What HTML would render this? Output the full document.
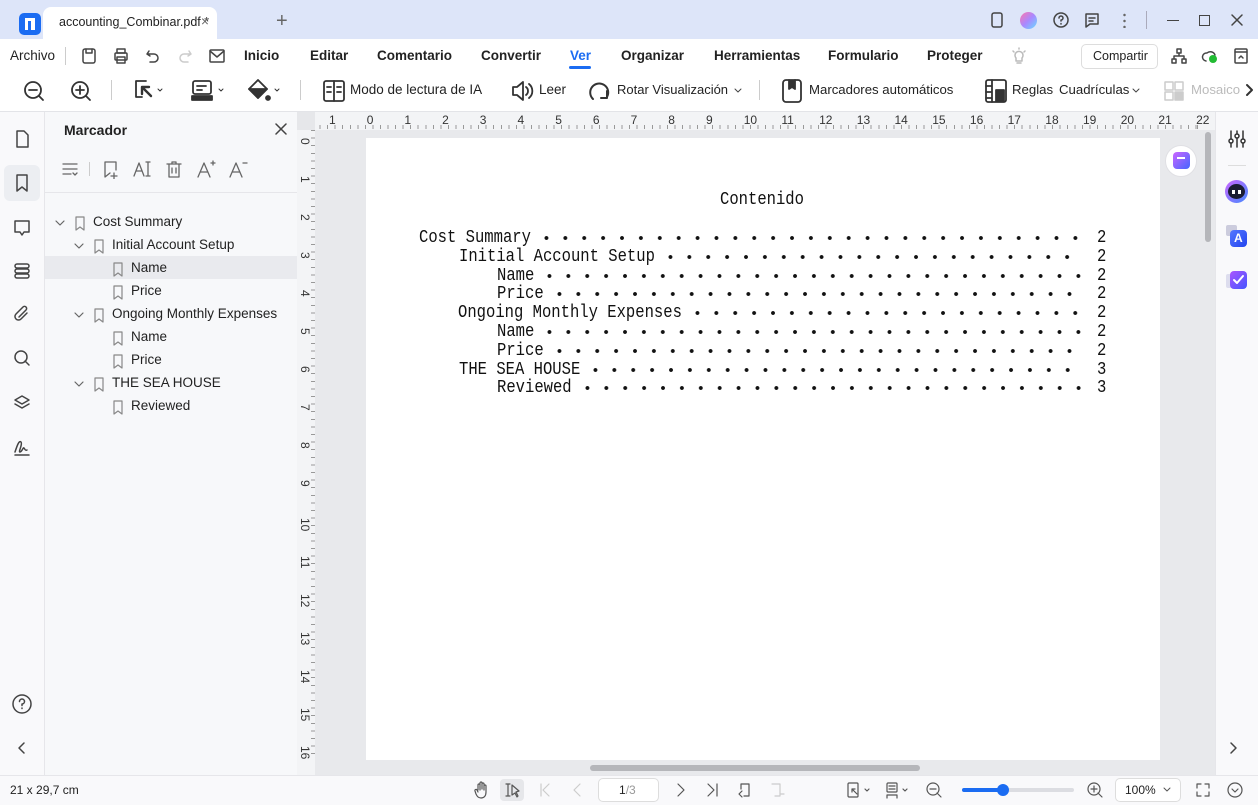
<!DOCTYPE html>
<html><head><meta charset="utf-8"><style>
*{margin:0;padding:0;box-sizing:border-box}
body{width:1258px;height:805px;overflow:hidden;position:relative;font-family:"Liberation Sans",sans-serif;background:#fff;color:#222}
.a{position:absolute}
.t{font-size:13.5px;white-space:nowrap}
.m{font-weight:bold;font-size:13.5px}
svg{position:absolute;fill:none;stroke:#444;stroke-width:1.5;stroke-linecap:round;stroke-linejoin:round}
.doc{font-family:"Liberation Mono",monospace;font-size:15.55px;color:#111;white-space:nowrap;transform-origin:0 50%;transform:scaleY(1.2)}
.dots{position:absolute;height:4px;background:radial-gradient(circle,#111 1.7px,transparent 2.2px) 0 0/18.9px 4px repeat-x}
.rl{position:absolute;font-size:12px;color:#333}
</style></head><body>
<div class="a" style="left:0;top:0;width:1258px;height:39px;background:#dde5f9"></div>
<div class="a" style="left:19px;top:13px;width:22px;height:22px;border-radius:5px;background:#1b6cf2"></div>
<div class="a" style="left:25px;top:18px;width:10px;height:12px;border:3px solid #fff;border-right-width:4px;border-bottom:none"></div>
<div class="a" style="left:43px;top:7px;width:174px;height:32px;background:#fff;border-radius:8px 8px 0 0"></div>
<div class="a t" style="left:59px;top:15px;font-size:12.5px">accounting_Combinar.pdf *</div>
<div class="a t" style="left:201px;top:14px;color:#666">×</div>
<div class="a t" style="left:276px;top:10px;font-size:20px;color:#666">+</div>
<svg style="left:988px;top:11px" width="18" height="18"><rect x="4" y="2" width="10" height="14" rx="2"/></svg>
<div class="a" style="left:1020px;top:12px;width:17px;height:17px;border-radius:50%;background:linear-gradient(135deg,#f7a,#a8f,#6df)"></div>
<svg style="left:1052px;top:11px" width="18" height="18"><circle cx="9" cy="9" r="7"/><path d="M7 7a2 2 0 1 1 2 2v1M9 12.5v.5"/></svg>
<svg style="left:1083px;top:11px" width="18" height="18"><path d="M3 3h12v10H7l-4 3z"/><path d="M6 7h6M6 10h4"/></svg>
<div class="a" style="left:1123px;top:12px;width:3px;height:16px;background:radial-gradient(circle,#666 1px,transparent 1.5px) 0 0/3px 6px"></div>
<div class="a" style="left:1146px;top:11px;width:1px;height:18px;background:#aab"></div>
<div class="a" style="left:1167px;top:20px;width:12px;height:1px;background:#444"></div>
<div class="a" style="left:1199px;top:15px;width:11px;height:11px;border:1.3px solid #444"></div>
<svg style="left:1228px;top:11px" width="18" height="18"><path d="M4 4l10 10M14 4L4 14"/></svg>
<div class="a t" style="left:10px;top:48px">Archivo</div>
<div class="a" style="left:65px;top:47px;width:1px;height:18px;background:#ccc"></div>
<svg style="left:80px;top:47px" width="18" height="18"><rect x="3" y="2" width="12" height="14" rx="2"/><path d="M6 2v4h6V2"/></svg>
<svg style="left:112px;top:47px" width="18" height="18"><rect x="3" y="6" width="12" height="7" rx="1"/><rect x="5" y="2" width="8" height="4"/><rect x="5" y="10" width="8" height="6"/></svg>
<svg style="left:144px;top:47px" width="18" height="18"><path d="M5 4L3 7l3 2M3 7h7a4 4 0 0 1 0 8H6"/></svg>
<svg style="left:176px;top:47px;stroke:#ccc" width="18" height="18"><path d="M13 4l2 3-3 2M15 7H8a4 4 0 0 0 0 8h4"/></svg>
<svg style="left:208px;top:47px" width="18" height="18"><rect x="2" y="3" width="14" height="12" rx="1"/><path d="M2 4l7 6 7-6"/></svg>
<div class="a t m" style="left:244px;top:48px">Inicio</div>
<div class="a t m" style="left:310px;top:48px">Editar</div>
<div class="a t m" style="left:377px;top:48px">Comentario</div>
<div class="a t m" style="left:481px;top:48px">Convertir</div>
<div class="a t m" style="left:570px;top:48px;color:#1b6cf2">Ver</div>
<div class="a" style="left:569px;top:66px;width:22px;height:3px;border-radius:2px;background:#1b6cf2"></div>
<div class="a t m" style="left:621px;top:48px">Organizar</div>
<div class="a t m" style="left:714px;top:48px">Herramientas</div>
<div class="a t m" style="left:828px;top:48px">Formulario</div>
<div class="a t m" style="left:927px;top:48px">Proteger</div>
<svg style="left:1010px;top:46px;stroke:#bbb" width="18" height="20"><path d="M6 12a4 4 0 1 1 6 0v3H6zM7 17h4M9 2v1M3 5l1 1M15 5l-1 1"/></svg>
<div class="a" style="left:1081px;top:44px;width:77px;height:25px;border:1px solid #ddd;border-radius:5px"></div>
<div class="a t" style="left:1093px;top:49px;font-size:12.5px">Compartir</div>
<svg style="left:1170px;top:47px" width="18" height="18"><rect x="7" y="2" width="4" height="4"/><rect x="2" y="12" width="4" height="4"/><rect x="12" y="12" width="4" height="4"/><path d="M9 6v3M4 12V9h10v3"/></svg>
<svg style="left:1201px;top:47px" width="18" height="18"><path d="M5 14a4 4 0 0 1 1-8 5 5 0 0 1 8 2"/></svg>
<div class="a" style="left:1209px;top:55px;width:8px;height:8px;border-radius:50%;background:#2b3"></div>
<svg style="left:1232px;top:47px" width="18" height="18"><rect x="3" y="2" width="12" height="14" rx="1"/><path d="M3 5h12M7 11l2-2 2 2"/></svg>
<svg style="left:22px;top:79px;stroke:#333;stroke-width:1.8" width="24" height="24"><circle cx="11" cy="11" r="8"/><path d="M7 11h8M17 17l4 4"/></svg>
<svg style="left:69px;top:79px;stroke:#333;stroke-width:1.8" width="24" height="24"><circle cx="11" cy="11" r="8"/><path d="M7 11h8M11 7v8M17 17l4 4"/></svg>
<div class="a" style="left:111px;top:80px;width:1px;height:20px;background:#ccc"></div>
<svg style="left:132px;top:78px;stroke:#333;stroke-width:1.8" width="36" height="24"><path d="M14 3H4v16h6"/><path d="M10 9l9 9M10 9v7M10 9h7" stroke-width="2.4"/><path d="M26 11l2 2 2-2" stroke-width="1"/></svg>
<svg style="left:190px;top:78px;stroke:#333;stroke-width:1.8" width="36" height="24"><rect x="3" y="3" width="18" height="13" rx="2"/><path d="M7 8h9M7 12h5"/><rect x="2" y="18" width="20" height="4" fill="#333"/><path d="M29 11l2 2 2-2" stroke-width="1"/></svg>
<svg style="left:246px;top:78px;stroke:#333;stroke-width:1.8" width="36" height="24"><path d="M12 2l9 9-9 9-9-9z"/><path d="M3 11h18l-9 9z" fill="#333"/><circle cx="22" cy="20" r="2" fill="#333"/><path d="M29 11l2 2 2-2" stroke-width="1"/></svg>
<div class="a" style="left:300px;top:80px;width:1px;height:20px;background:#ccc"></div>
<svg style="left:322px;top:79px;stroke:#333;stroke-width:1.8" width="24" height="24"><rect x="2" y="2" width="20" height="20" rx="2"/><path d="M12 2v20M5 8h4M5 13h4M15 8h4M15 13h4"/></svg>
<div class="a t" style="left:350px;top:82px">Modo de lectura de IA</div>
<svg style="left:510px;top:79px;stroke:#333;stroke-width:1.8" width="24" height="24"><path d="M3 8h4l6-5v18l-6-5H3z"/><path d="M16 8a5 5 0 0 1 0 8M19 5a9 9 0 0 1 0 14"/></svg>
<div class="a t" style="left:539px;top:82px">Leer</div>
<svg style="left:588px;top:79px;stroke:#333;stroke-width:2" width="24" height="24"><path d="M5 20A9 9 0 1 1 19 18"/><path d="M19 12v7h-6"/></svg>
<div class="a t" style="left:617px;top:82px;font-size:13px">Rotar Visualización</div>
<svg style="left:734px;top:86px;stroke-width:1" width="8" height="8"><path d="M1 3l3 3 3-3"/></svg>
<div class="a" style="left:759px;top:80px;width:1px;height:20px;background:#ccc"></div>
<svg style="left:780px;top:78px;stroke:#333;stroke-width:1.8" width="24" height="26"><rect x="3" y="2" width="18" height="22" rx="3"/><path d="M9 2v9l3-2 3 2V2" fill="#333"/></svg>
<div class="a t" style="left:809px;top:82px;font-size:13.2px">Marcadores automáticos</div>
<svg style="left:984px;top:78px;stroke:#333;stroke-width:1.8" width="24" height="26"><rect x="2" y="2" width="20" height="22" rx="2"/><path d="M8 2v22M2 8h6M2 14h6M2 20h6"/><rect x="12" y="12" width="8" height="11" fill="#333"/></svg>
<div class="a t" style="left:1012px;top:82px;font-size:13.2px">Reglas</div>
<div class="a t" style="left:1059px;top:82px;font-size:13.2px">Cuadrículas</div>
<svg style="left:1132px;top:86px;stroke-width:1" width="8" height="8"><path d="M1 3l3 3 3-3"/></svg>
<svg style="left:1163px;top:80px;stroke:#ccc;stroke-width:1.5" width="22" height="22"><rect x="2" y="2" width="8" height="8"/><rect x="12" y="2" width="8" height="8"/><rect x="2" y="12" width="8" height="8"/><rect x="12" y="12" width="8" height="8" fill="#ccc"/></svg>
<div class="a t" style="left:1191px;top:82px;color:#bbb;font-size:13.2px">Mosaicos</div>
<div class="a" style="left:1240px;top:75px;width:18px;height:30px;background:#fff"></div>
<svg style="left:1244px;top:83px;stroke:#333;stroke-width:2" width="12" height="14"><path d="M3 2l5 5-5 5"/></svg>
<div class="a" style="left:0;top:111px;width:1258px;height:1px;background:#e3e4e8"></div>
<div class="a" style="left:0;top:112px;width:45px;height:663px;background:#f9f9fb;border-right:1px solid #e6e6ea"></div>
<svg style="left:13px;top:129px" width="18" height="20"><path d="M4 2h7l4 4v12H4z"/></svg>
<div class="a" style="left:4px;top:165px;width:36px;height:36px;border-radius:6px;background:#eceef2"></div>
<svg style="left:13px;top:173px" width="18" height="20"><path d="M4 2h10v16l-5-4-5 4z"/></svg>
<svg style="left:13px;top:218px" width="18" height="20"><path d="M2 3h14v11H11l-2 3-2-3H2z"/></svg>
<svg style="left:13px;top:261px" width="18" height="20"><rect x="2" y="3" width="14" height="4" rx="2"/><rect x="2" y="8" width="14" height="4" rx="2"/><rect x="2" y="13" width="14" height="4" rx="2"/></svg>
<svg style="left:12px;top:304px" width="20" height="20"><path d="M15 9l-6 6a3 3 0 0 1-5-5l7-7a2 2 0 0 1 3 3l-7 7"/></svg>
<svg style="left:12px;top:348px" width="20" height="20"><circle cx="9" cy="9" r="6"/><path d="M13 13l4 4"/></svg>
<svg style="left:12px;top:393px" width="20" height="20"><path d="M10 3l7 4-7 4-7-4z"/><path d="M3 11l7 4 7-4"/></svg>
<svg style="left:12px;top:437px" width="20" height="20"><path d="M3 15c2-6 4-12 6-10s-3 10-1 10 3-5 4-4 1 3 3 2M3 18h14"/></svg>
<svg style="left:11px;top:693px" width="22" height="22"><circle cx="11" cy="11" r="9"/><path d="M8.5 8.5a2.5 2.5 0 1 1 2.5 2.5v1.5M11 15v.5"/></svg>
<svg style="left:16px;top:741px" width="12" height="14"><path d="M8 2L3 7l5 5"/></svg>
<div class="a" style="left:45px;top:112px;width:252px;height:663px;background:#f7f8fa"></div>
<div class="a t" style="left:64px;top:122px;font-weight:bold;font-size:14px">Marcador</div>
<svg style="left:274px;top:122px" width="14" height="14"><path d="M2 2l10 10M12 2L2 12"/></svg>
<svg style="left:60px;top:159px;stroke:#666;stroke-width:1.3" width="20" height="20"><path d="M3 5h14M3 10h14M3 15h8M13 14l2 2 2-2"/></svg>
<div class="a" style="left:89px;top:162px;width:1px;height:14px;background:#ccc"></div>
<svg style="left:101px;top:159px;stroke:#666;stroke-width:1.3" width="20" height="20"><path d="M4 3h11v8M4 3v15l5-4M13 14v6M10 17h6"/></svg>
<svg style="left:132px;top:159px;stroke:#666;stroke-width:1.3" width="20" height="20"><path d="M2 17l5-13 5 13M4 12h6M14 3h4M16 3v14M14 17h4"/></svg>
<svg style="left:164px;top:159px;stroke:#666;stroke-width:1.3" width="20" height="20"><path d="M3 5h14M8 5V3h4v2M5 5v13h10V5M8 9v5M12 9v5"/></svg>
<svg style="left:196px;top:159px;stroke:#666;stroke-width:1.3" width="20" height="20"><path d="M2 18l6-14 6 14M4.5 13h7M15 4h4M17 2v4"/></svg>
<svg style="left:228px;top:159px;stroke:#666;stroke-width:1.3" width="20" height="20"><path d="M2 18l6-14 6 14M4.5 13h7M15 4h4"/></svg>
<div class="a" style="left:45px;top:192px;width:252px;height:1px;background:#e6e6ea"></div>
<div class="a" style="left:45px;top:256px;width:252px;height:23px;background:#e9eaee"></div>
<div id="tree"></div>
<div class="a" style="left:297px;top:112px;width:918px;height:18px;background:#f3f4f6"></div>
<div class="a" style="left:297px;top:112px;width:18px;height:663px;background:#f3f4f6"></div>
<div class="a" style="left:297px;top:112px;width:18px;height:18px;background:#e6e7ea"></div>
<div class="a" style="left:315px;top:125px;width:885px;height:4px;background:repeating-linear-gradient(90deg,#999 0 1px,transparent 1px 7.55px);background-position:-3px 0"></div>
<div class="a" style="left:311px;top:130px;width:4px;height:630px;background:repeating-linear-gradient(180deg,#999 0 1px,transparent 1px 7.6px)"></div>
<div id="rul"></div>
<div class="a" style="left:315px;top:130px;width:900px;height:645px;background:#e8e9ec"></div>
<div class="a" style="left:366px;top:138px;width:794px;height:622px;background:#fff"></div>
<div class="a" style="left:1205px;top:132px;width:6px;height:110px;border-radius:3px;background:#b5b6ba"></div>
<div class="a" style="left:590px;top:765px;width:330px;height:6px;border-radius:3px;background:#b5b6ba"></div>
<div class="a" style="left:1165px;top:145px;width:32px;height:32px;border-radius:50%;background:#fff;border:1px solid #e0e0e4"></div>
<div class="a" style="left:1173px;top:152px;width:17px;height:17px;border-radius:4px;background:linear-gradient(135deg,#c6f,#46f)"></div>
<div class="a" style="left:1177px;top:157px;width:8px;height:2px;background:#fff"></div>
<div class="a doc" style="left:720px;top:190px">Contenido</div>
<div id="toc"></div>
<div class="a" style="left:1215px;top:112px;width:43px;height:663px;background:#f9f9fb;border-left:1px solid #e6e6ea"></div>
<svg style="left:1227px;top:129px;stroke:#333" width="20" height="20"><path d="M4 2v16M10 2v16M16 2v16"/><circle cx="4" cy="12" r="2" fill="#fff"/><circle cx="10" cy="7" r="2" fill="#fff"/><circle cx="16" cy="12" r="2" fill="#fff"/></svg>
<div class="a" style="left:1228px;top:165px;width:18px;height:1px;background:#ddd"></div>
<div class="a" style="left:1225px;top:180px;width:23px;height:23px;border-radius:50%;background:linear-gradient(135deg,#c6f,#48f)"></div>
<div class="a" style="left:1228px;top:184px;width:17px;height:15px;border-radius:50%;background:#1a1d33"></div>
<div class="a" style="left:1232px;top:190px;width:3px;height:4px;background:#fff"></div><div class="a" style="left:1238px;top:190px;width:3px;height:4px;background:#fff"></div>
<div class="a" style="left:1226px;top:225px;width:11px;height:11px;border-radius:2px;background:#ccd"></div>
<div class="a" style="left:1230px;top:230px;width:17px;height:17px;border-radius:4px;background:linear-gradient(135deg,#57f,#24e)"></div>
<div class="a t" style="left:1234px;top:231px;color:#fff;font-size:12px;font-weight:bold">A</div>
<div class="a" style="left:1226px;top:274px;width:11px;height:14px;border-radius:2px;background:#dde"></div>
<div class="a" style="left:1230px;top:271px;width:17px;height:18px;border-radius:4px;background:linear-gradient(135deg,#a5f,#45f)"></div>
<svg style="left:1232px;top:274px;stroke:#fff;stroke-width:2" width="14" height="12"><path d="M2 6l3 3 6-7"/></svg>
<svg style="left:1227px;top:741px" width="12" height="14"><path d="M4 2l5 5-5 5"/></svg>
<div class="a" style="left:0;top:775px;width:1258px;height:30px;background:#f9f9fb;border-top:1px solid #e6e6ea"></div>
<div class="a t" style="left:10px;top:783px;font-size:12px">21 x 29,7 cm</div>
<svg style="left:473px;top:781px;stroke:#555;stroke-width:1.2" width="16" height="18"><path d="M5 9V4a1 1 0 0 1 2 0v5M7 8V2a1 1 0 0 1 2 0v6M9 8V3a1 1 0 0 1 2 0v6M11 9V5a1 1 0 0 1 2 0v6c0 4-2 6-5 6s-4-2-5-4l-1-3a1 1 0 0 1 2-1l1 2"/></svg>
<div class="a" style="left:500px;top:779px;width:24px;height:22px;border-radius:4px;background:#e6e7ea"></div>
<svg style="left:504px;top:781px;stroke:#555;stroke-width:1.2" width="18" height="18"><path d="M2 3h4M4 3v12M2 15h4M8 4l7 6-3 1 2 4-1 1-2-4-3 2z"/></svg>
<svg style="left:538px;top:782px;stroke:#ccc;stroke-width:1.2" width="14" height="16"><path d="M3 2v12M11 2L5 8l6 6"/></svg>
<svg style="left:570px;top:782px;stroke:#ccc;stroke-width:1.2" width="14" height="16"><path d="M10 2L4 8l6 6"/></svg>
<div class="a" style="left:598px;top:778px;width:61px;height:24px;border:1px solid #ddd;border-radius:5px;background:#fff"></div>
<div class="a t" style="left:619px;top:783px;font-size:12px">1<span style="color:#999">/3</span></div>
<svg style="left:674px;top:782px;stroke:#555;stroke-width:1.2" width="14" height="16"><path d="M4 2l6 6-6 6"/></svg>
<svg style="left:705px;top:782px;stroke:#555;stroke-width:1.2" width="14" height="16"><path d="M3 2l6 6-6 6M12 2v12"/></svg>
<svg style="left:736px;top:781px;stroke:#555;stroke-width:1.2" width="16" height="18"><path d="M5 3h8v12H8M5 3v5M3 13l3 3M3 13l3-3"/></svg>
<svg style="left:769px;top:781px;stroke:#ccc;stroke-width:1.2" width="16" height="18"><path d="M3 3h8v12H6M11 13h4"/></svg>
<svg style="left:846px;top:781px;stroke:#555;stroke-width:1.2" width="28" height="18"><rect x="2" y="2" width="10" height="14" rx="1"/><path d="M6 8l5 5M6 8v3M6 8h3M19 8l2 2 2-2"/></svg>
<svg style="left:884px;top:781px;stroke:#555;stroke-width:1.2" width="28" height="18"><rect x="3" y="2" width="10" height="9" rx="1"/><path d="M5 5h6M5 8h6M3 14h10M3 14v3M13 14v3M19 8l2 2 2-2"/></svg>
<svg style="left:925px;top:781px;stroke:#555;stroke-width:1.2" width="18" height="18"><circle cx="8" cy="8" r="6"/><path d="M5 8h6M12 12l4 4"/></svg>
<div class="a" style="left:962px;top:788px;width:42px;height:4px;border-radius:2px;background:#1b6cf2"></div>
<div class="a" style="left:1004px;top:788px;width:70px;height:4px;border-radius:2px;background:#dcdde2"></div>
<div class="a" style="left:997px;top:784px;width:12px;height:12px;border-radius:50%;background:#1b6cf2"></div>
<svg style="left:1086px;top:781px;stroke:#555;stroke-width:1.2" width="18" height="18"><circle cx="8" cy="8" r="6"/><path d="M5 8h6M8 5v6M12 12l4 4"/></svg>
<div class="a" style="left:1115px;top:778px;width:66px;height:24px;border:1px solid #ddd;border-radius:5px;background:#fff"></div>
<div class="a t" style="left:1125px;top:783px;font-size:12px">100%</div>
<svg style="left:1162px;top:786px;stroke:#555;stroke-width:1" width="10" height="8"><path d="M2 2l3 3 3-3"/></svg>
<svg style="left:1194px;top:781px;stroke:#555;stroke-width:1.2" width="18" height="18"><path d="M3 7V3h4M11 3h4v4M15 11v4h-4M7 15H3v-4"/></svg>
<svg style="left:1225px;top:780px;stroke:#555;stroke-width:1.2" width="20" height="20"><circle cx="10" cy="10" r="7"/><path d="M7 9l3 3 3-3"/></svg>
<script>
var h='';
[[0,'Cost Summary',1],[1,'Initial Account Setup',1],[2,'Name'],[2,'Price'],[1,'Ongoing Monthly Expenses',1],[2,'Name'],[2,'Price'],[1,'THE SEA HOUSE',1],[2,'Reviewed']].forEach(function(r,i){
var y=214+i*23,x=74+r[0]*19;
if(r[2])h+='<svg style="left:'+(x-20)+'px;top:'+(y+3)+'px;stroke:#666;stroke-width:1.2" width="12" height="12"><path d="M2 4l4 4 4-4"/></svg>';
h+='<svg style="left:'+x+'px;top:'+(y+2)+'px;stroke:#888;stroke-width:1.2" width="12" height="16"><path d="M2 1h8v13l-4-3-4 3z"/></svg>';
h+='<div class="a t" style="left:'+(x+19)+'px;top:'+y+'px;font-size:13.5px">'+r[1]+'</div>';});
document.getElementById('tree').outerHTML=h;
h='';
var lb=['1','0','1','2','3','4','5','6','7','8','9','10','11','12','13','14','15','16','17','18','19','20','21','22'];
lb.forEach(function(s,i){h+='<div class="rl" style="left:'+(329+i*37.7)+'px;top:113px">'+s+'</div>';});
for(var i=0;i<=16;i++){h+='<div class="rl" style="left:299px;top:'+(137+i*38)+'px;transform:rotate(90deg);transform-origin:6px 7px;width:14px">'+i+'</div>';}
document.getElementById('rul').outerHTML=h;
h='';
var rows=[[419,'Cost Summary',2],[459,'Initial Account Setup',2],[497,'Name',2],[497,'Price',2],[458,'Ongoing Monthly Expenses',2],[497,'Name',2],[497,'Price',2],[459,'THE SEA HOUSE',3],[497,'Reviewed',3]];
rows.forEach(function(r,i){
var y=238+i*18.8;
h+='<div class="a doc" style="left:'+r[0]+'px;top:'+(y-10)+'px">'+r[1]+'</div>';
h+='<div class="a doc" style="left:1097px;top:'+(y-10)+'px">'+r[2]+'</div>';
var s=r[0]+r[1].length*9.33+6;
h+='<div class="dots" style="left:'+s+'px;top:'+(y-2)+'px;width:'+(1082-s)+'px"></div>';
});
document.getElementById('toc').outerHTML=h;
</script>
</body></html>
